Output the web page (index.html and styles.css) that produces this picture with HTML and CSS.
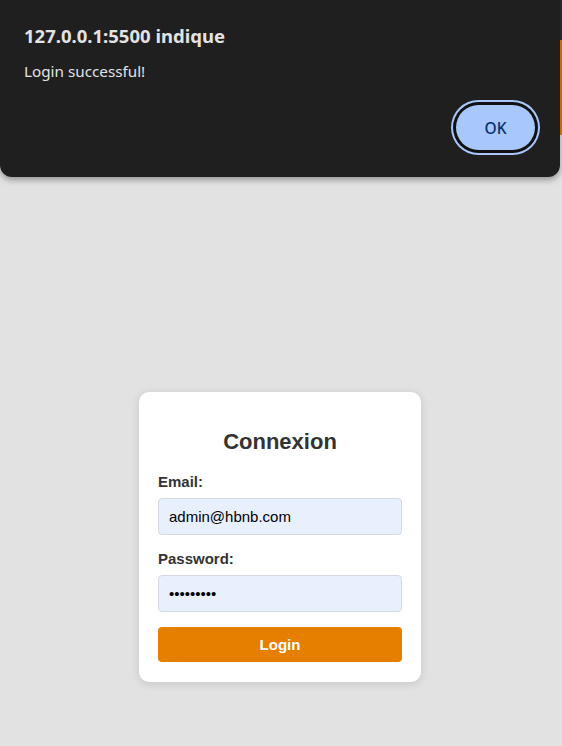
FILE: index.html
```html
<!DOCTYPE html>
<html lang="fr">
<head>
<meta charset="utf-8">
<title>Connexion</title>
<link rel="stylesheet" href="styles.css">
</head>
<body>
<header class="top-bar"></header>
<div class="banner"></div>
<main class="main">
  <form class="card">
    <h2 class="card-title">Connexion</h2>
    <label class="field-label" for="email">Email:</label>
    <input class="field-input" id="email" type="text" value="admin@hbnb.com">
    <label class="field-label" for="password">Password:</label>
    <input class="field-input" id="password" type="password" value="123456789">
    <button class="login-btn" type="button">Login</button>
  </form>
</main>
<div class="dialog">
  <div class="dialog-title">127.0.0.1:5500 indique</div>
  <div class="dialog-msg">Login successful!</div>
  <div class="dialog-actions">
    <button class="ok-btn" type="button">OK</button>
  </div>
</div>
</body>
</html>
```
FILE: styles.css
```css
html, body {
  margin: 0;
  padding: 0;
}
body {
  background: #e2e2e2;
  font-family: "Liberation Sans", Arial, sans-serif;
  width: 562px;
  height: 746px;
  overflow: hidden;
  position: relative;
}
.top-bar {
  height: 40px;
  background: #2e2e2e;
}
.banner {
  height: 95px;
  background: #e67e00;
}
.main {
  display: flex;
  justify-content: center;
  padding-top: 257px;
  padding-right: 2px;
}
.card {
  width: 282px;
  box-sizing: border-box;
  background: #fff;
  border-radius: 10px;
  padding: 20px 19px 20px;
  box-shadow: 0 2px 10px rgba(0, 0, 0, 0.12);
  display: flex;
  flex-direction: column;
}
.card-title {
  margin: 17px 0 19px;
  font-size: 22px;
  line-height: 25px;
  font-weight: bold;
  color: #333;
  text-align: center;
}
.field-label {
  font-size: 15px;
  line-height: 17px;
  font-weight: bold;
  color: #333;
  margin-bottom: 8px;
}
.field-input {
  height: 37px;
  box-sizing: border-box;
  border: 1px solid #d4d8e0;
  border-radius: 4px;
  background: #e8f0fe;
  padding: 0 10px;
  font-family: "Liberation Sans", Arial, sans-serif;
  font-size: 15px;
  color: #000;
  margin-bottom: 15px;
  outline: none;
}
.field-input[type="password"] {
  margin-bottom: 15px;
}
.login-btn {
  height: 35px;
  border: none;
  border-radius: 4px;
  background: #e67e00;
  color: #fff;
  font-family: "Liberation Sans", Arial, sans-serif;
  font-size: 15px;
  font-weight: bold;
}
.dialog {
  position: absolute;
  left: 0;
  top: -12px;
  width: 560px;
  height: 189px;
  box-sizing: border-box;
  background: #1f1f1f;
  border-radius: 12px;
  box-shadow: 0 3px 6px rgba(0, 0, 0, 0.35);
  padding: 36px 24px 0;
  font-family: "Noto Sans", "Open Sans", sans-serif;
  color: #e3e3e3;
}
.dialog-title {
  font-size: 18.5px;
  font-weight: bold;
  line-height: 24px;
}
.dialog-msg {
  margin-top: 13px;
  font-size: 15.25px;
  line-height: 20px;
}
.dialog-actions {
  display: flex;
  justify-content: flex-end;
  padding-right: 1px;
  margin-top: 24px;
}
.ok-btn {
  width: 79px;
  height: 45px;
  border: none;
  border-radius: 999px;
  background: #a8c7fa;
  color: #062e6f;
  font-family: "Noto Sans", "Open Sans", sans-serif;
  font-size: 15.5px;
  font-weight: 500;
  box-shadow: 0 0 0 3px #111, 0 0 0 5px #a8c7fa;
}
```
